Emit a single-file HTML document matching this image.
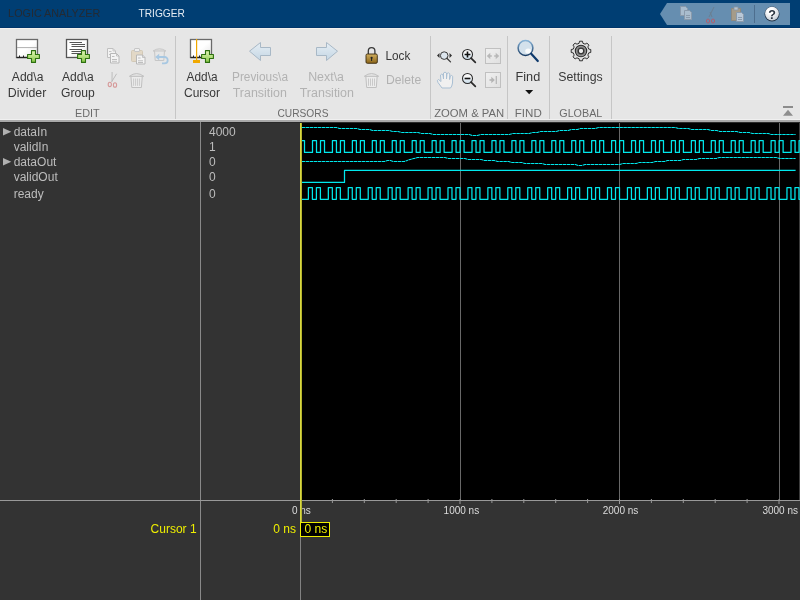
<!DOCTYPE html>
<html><head><meta charset="utf-8"><title>Logic Analyzer</title>
<style>
html,body{margin:0;padding:0;width:800px;height:600px;overflow:hidden;background:#333;}
svg{display:block;will-change:transform;font-family:"Liberation Sans", sans-serif;}
</style></head>
<body>
<svg width="800" height="600" viewBox="0 0 800 600">
<defs>
<linearGradient id="gp" x1="0" y1="0" x2="0" y2="1"><stop offset="0" stop-color="#e4f8b8"/><stop offset="1" stop-color="#88c848"/></linearGradient>
<linearGradient id="wg" x1="0" y1="0" x2="1" y2="1"><stop offset="0.5" stop-color="#ffffff"/><stop offset="1" stop-color="#e2e2e2"/></linearGradient>
<linearGradient id="ag" x1="0" y1="0" x2="0" y2="1"><stop offset="0" stop-color="#e6eef4"/><stop offset="1" stop-color="#c4d6e4"/></linearGradient>
<linearGradient id="lg" x1="0" y1="0" x2="0" y2="1"><stop offset="0" stop-color="#d2b060"/><stop offset="1" stop-color="#8a6418"/></linearGradient>
<radialGradient id="fg" cx="0.6" cy="0.65" r="0.6"><stop offset="0" stop-color="#ffffff"/><stop offset="1" stop-color="#c8d8e6"/></radialGradient>
<radialGradient id="gg" cx="0.5" cy="0.5" r="0.5"><stop offset="0.5" stop-color="#f4f4f4"/><stop offset="1" stop-color="#cfcfcf"/></radialGradient><radialGradient id="gi" cx="0.5" cy="0.5" r="0.5"><stop offset="0.45" stop-color="#5a5a5a"/><stop offset="1" stop-color="#b0b0b0"/></radialGradient><linearGradient id="fr" x1="0" y1="0" x2="0" y2="1"><stop offset="0" stop-color="#86b2d6"/><stop offset="1" stop-color="#1a3c64"/></linearGradient>
<radialGradient id="hg" cx="0.4" cy="0.3" r="0.7"><stop offset="0.3" stop-color="#ffffff"/><stop offset="1" stop-color="#c9d0d8"/></radialGradient>
<linearGradient id="zg" x1="0" y1="0" x2="0" y2="1"><stop offset="0.3" stop-color="#f8f8f8"/><stop offset="1" stop-color="#c8dcea"/></linearGradient>
<linearGradient id="bx" x1="0" y1="0" x2="1" y2="1"><stop offset="0" stop-color="#f0f0f0"/><stop offset="1" stop-color="#e0e0e0"/></linearGradient>
</defs>
<rect x="0" y="0" width="800" height="27" fill="#003e73"/>
<rect x="0" y="27" width="800" height="1" fill="#00356a"/>
<rect x="0" y="28" width="800" height="1" fill="#f2f0ee"/>
<text x="8.13" y="17" font-size="10.5" fill="#232a33" textLength="92.17" lengthAdjust="spacingAndGlyphs" >LOGIC ANALYZER</text>
<text x="138.52" y="17" font-size="10.5" fill="#e4ebf2" textLength="46.35" lengthAdjust="spacingAndGlyphs" >TRIGGER</text>
<path d="M660 14 L667 3 L790 3 L790 25 L667 25 Z" fill="#668eb0"/>
<line x1="754.5" y1="5" x2="754.5" y2="23" stroke="#4d6e8e" stroke-width="1"/>
<g transform="translate(680,6)"><path d="M0.5 0.5 H5.5 L7.5 2.5 V9.5 H0.5 Z" fill="#a9bccd" stroke="#8a9aab"/><path d="M4.5 4.5 H9.5 L11.5 6.5 V13.5 H4.5 Z" fill="#a9bccd" stroke="#8a9aab"/><path d="M6 9.5 H10 M6 11.5 H10" stroke="#8a9aab"/></g>
<g transform="translate(704,6)"><path d="M5 11 L10 1 M8 11 L6 6" stroke="#6a7f92" stroke-width="1"/><ellipse cx="4" cy="15" rx="1.6" ry="2" fill="none" stroke="#b06070" stroke-width="1"/><ellipse cx="9" cy="15" rx="1.6" ry="2" fill="none" stroke="#b06070" stroke-width="1"/></g>
<g transform="translate(731,6)"><rect x="0.5" y="2.5" width="9" height="12" fill="#a59c8a" stroke="#8f8a80"/><rect x="3" y="1" width="4" height="3" fill="#b8c4cf" stroke="#8a96a2" stroke-width="0.8"/><path d="M5.5 6.5 H10.5 L12.5 8.5 V15.5 H5.5 Z" fill="#b8c8d8" stroke="#8a9aab"/><path d="M7 11.5 H11 M7 13.5 H11" stroke="#8a9aab"/></g>
<circle cx="772" cy="14" r="7.5" fill="#24364a"/><circle cx="772" cy="13.6" r="6.9" fill="url(#hg)"/><text x="772" y="18.6" font-size="12.5" font-weight="bold" fill="#2a3440" text-anchor="middle">?</text>
<rect x="0" y="29" width="800" height="90" fill="#e6e6e6"/>
<rect x="0" y="119" width="800" height="1" fill="#f0f0f0"/>
<rect x="0" y="120" width="800" height="2" fill="#a9a9a9"/>
<line x1="175.5" y1="36" x2="175.5" y2="119" stroke="#c6c6c6" stroke-width="1"/>
<line x1="430.5" y1="36" x2="430.5" y2="119" stroke="#c6c6c6" stroke-width="1"/>
<line x1="507.5" y1="36" x2="507.5" y2="119" stroke="#c6c6c6" stroke-width="1"/>
<line x1="549.5" y1="36" x2="549.5" y2="119" stroke="#c6c6c6" stroke-width="1"/>
<line x1="611.5" y1="36" x2="611.5" y2="119" stroke="#c6c6c6" stroke-width="1"/>
<rect x="16.5" y="39.5" width="21" height="18" fill="url(#wg)" stroke="#6a6a6a" stroke-width="1.3"/>
<line x1="17" y1="47.6" x2="37" y2="47.6" stroke="#b0b0b0" stroke-width="1"/>
<path d="M16.5 57.5 H31" stroke="#222" stroke-width="1.3"/><path d="M19.5 57 V55.5 M23.5 57 V55.5 M27.5 57 V55.5" stroke="#222" stroke-width="1"/>
<g transform="translate(33.5,56.5)"><path d="M-2 -5.9 H2 V-2 H5.9 V2 H2 V5.9 H-2 V2 H-5.9 V-2 H-2 Z" fill="url(#gp)" stroke="#2d7010" stroke-width="1.1" stroke-linejoin="round"/></g>
<rect x="66.5" y="39.5" width="21" height="18" fill="url(#wg)" stroke="#555" stroke-width="1.3"/>
<line x1="69.5" y1="42.5" x2="82" y2="42.5" stroke="#555" stroke-width="1"/>
<line x1="71.5" y1="44.5" x2="85" y2="44.5" stroke="#555" stroke-width="1"/>
<line x1="71.5" y1="46.5" x2="85" y2="46.5" stroke="#555" stroke-width="1"/>
<line x1="69.5" y1="49.5" x2="82" y2="49.5" stroke="#555" stroke-width="1"/>
<line x1="71.5" y1="51.5" x2="85" y2="51.5" stroke="#555" stroke-width="1"/>
<line x1="71.5" y1="53.5" x2="85" y2="53.5" stroke="#555" stroke-width="1"/>
<g transform="translate(83.5,56.5)"><path d="M-2 -5.9 H2 V-2 H5.9 V2 H2 V5.9 H-2 V2 H-5.9 V-2 H-2 Z" fill="url(#gp)" stroke="#2d7010" stroke-width="1.1" stroke-linejoin="round"/></g>
<path d="M107.5 48.5 H113.0 L115.5 51.0 V57.5 H107.5 Z" fill="#f2f2f2" stroke="#c0c0c0"/><path d="M113.0 48.5 V51.0 H115.5" fill="none" stroke="#c0c0c0" stroke-width="0.8"/><line x1="109" y1="51.5" x2="111.5" y2="51.5" stroke="#c0c0c0" stroke-width="0.9"/><line x1="109" y1="54.5" x2="113" y2="54.5" stroke="#c0c0c0" stroke-width="0.9"/>
<path d="M110.5 53.5 H116.5 L119.0 56.0 V63.0 H110.5 Z" fill="#f4f4f4" stroke="#b8b8b8"/><path d="M116.5 53.5 V56.0 H119.0" fill="none" stroke="#b8b8b8" stroke-width="0.8"/><line x1="112" y1="56.5" x2="114.5" y2="56.5" stroke="#b8b8b8" stroke-width="0.9"/><line x1="112" y1="59.5" x2="117" y2="59.5" stroke="#b8b8b8" stroke-width="0.9"/><line x1="112" y1="61.3" x2="117" y2="61.3" stroke="#b8b8b8" stroke-width="0.9"/>
<rect x="131.5" y="50.5" width="11" height="11" rx="1" fill="#e2d8c6" stroke="#d2c8b6"/>
<rect x="134.5" y="48.5" width="5" height="3" rx="0.5" fill="#efefef" stroke="#c2c2c2" stroke-width="0.9"/>
<path d="M136.5 55.0 H142.5 L145.0 57.5 V64.0 H136.5 Z" fill="#f4f4f4" stroke="#b8b8b8"/><path d="M142.5 55.0 V57.5 H145.0" fill="none" stroke="#b8b8b8" stroke-width="0.8"/><line x1="138" y1="58.0" x2="140.5" y2="58.0" stroke="#b8b8b8" stroke-width="0.9"/><line x1="138" y1="60.8" x2="143" y2="60.8" stroke="#b8b8b8" stroke-width="0.9"/><line x1="138" y1="62.5" x2="143" y2="62.5" stroke="#b8b8b8" stroke-width="0.9"/>
<path d="M154.5 50.5 H164.5 L163.8 60.5 H155.2 Z" fill="#e6e6e6" stroke="#c6c6c6"/>
<path d="M153 51 Q159.5 46.5 166 51 Z" fill="#dedede" stroke="#c6c6c6" stroke-width="0.9"/>
<path d="M158.5 57 H164.5 A3.2 3.2 0 0 1 164.5 63.4 H162" fill="none" stroke="#a8c8e2" stroke-width="1.8"/>
<path d="M155.2 57 L159.2 53.8 V60.2 Z" fill="#a8c8e2"/>
<path d="M112.1 72 L112 81.4 M116.6 73.8 L111.5 82" stroke="#b8b8b8" stroke-width="0.9"/>
<ellipse cx="109.8" cy="84.4" rx="1.6" ry="2.2" fill="none" stroke="#d69a9a" stroke-width="1.1"/>
<ellipse cx="115" cy="85" rx="1.6" ry="2.3" fill="none" stroke="#d69a9a" stroke-width="1.1"/>
<g transform="translate(129.1,72)"><path d="M1.8 4 H13.2 L12.3 15.5 H2.7 Z" fill="#ececec" stroke="#c0c0c0"/><path d="M0.3 4.3 Q7.5 -1.2 14.7 4.3 Z" fill="#e4e4e4" stroke="#c0c0c0"/><path d="M4.5 6.5 V13.8 M6.5 6.5 V13.8 M8.5 6.5 V13.8 M10.5 6.5 V13.8" stroke="#c0c0c0" stroke-width="0.8"/></g>
<rect x="190.5" y="39.5" width="21" height="18" fill="url(#wg)" stroke="#6a6a6a" stroke-width="1.3"/>
<path d="M190.5 57.5 H205" stroke="#222" stroke-width="1.3"/><path d="M193.5 57 V55.5 M199.5 57 V55.5" stroke="#222" stroke-width="1"/>
<line x1="196.6" y1="39" x2="196.6" y2="61" stroke="#f0a800" stroke-width="1.2"/>
<rect x="193" y="60" width="7" height="3" fill="#f0a800"/>
<g transform="translate(207.5,56.5)"><path d="M-2 -5.9 H2 V-2 H5.9 V2 H2 V5.9 H-2 V2 H-5.9 V-2 H-2 Z" fill="url(#gp)" stroke="#2d7010" stroke-width="1.1" stroke-linejoin="round"/></g>
<path d="M249.5 51.2 L260.5 42.5 V47.5 H270.5 V55.5 H260.5 V60.5 Z" fill="url(#ag)" stroke="#a8b8c6" stroke-width="1"/>
<path d="M337.5 51.2 L326.5 42.5 V47.5 H316.5 V55.5 H326.5 V60.5 Z" fill="url(#ag)" stroke="#a8b8c6" stroke-width="1"/>
<path d="M368.3 55 V51 A3.3 3.3 0 0 1 374.9 51 V55" fill="none" stroke="#3a3a3a" stroke-width="1.3"/>
<rect x="366" y="54" width="11.3" height="9.3" rx="1.3" fill="url(#lg)" stroke="#3a2a10" stroke-width="0.9"/>
<circle cx="371.6" cy="57.8" r="1.1" fill="#222"/><path d="M371.6 58 V61" stroke="#222" stroke-width="1"/>
<g transform="translate(364,72)"><path d="M1.8 4 H13.2 L12.3 15.5 H2.7 Z" fill="#ececec" stroke="#c0c0c0"/><path d="M0.3 4.3 Q7.5 -1.2 14.7 4.3 Z" fill="#e4e4e4" stroke="#c0c0c0"/><path d="M4.5 6.5 V13.8 M6.5 6.5 V13.8 M8.5 6.5 V13.8 M10.5 6.5 V13.8" stroke="#c0c0c0" stroke-width="0.8"/></g>
<circle cx="444.2" cy="55.6" r="3.8" fill="#dde6ee" stroke="#3a3a3a" stroke-width="1.0"/><line x1="446.8866" y1="58.2866" x2="450.4866" y2="61.8866" stroke="#3a3a3a" stroke-width="1.3" stroke-linecap="round"/>
<path d="M437 55.5 L439.5 53 V58 Z M452 55.5 L449.5 53 V58 Z" fill="#333"/>
<circle cx="467.5" cy="54.5" r="5" fill="url(#zg)" stroke="#2a2a2a" stroke-width="1.05"/><line x1="471.035" y1="58.035" x2="475.33500000000004" y2="62.334999999999994" stroke="#2a2a2a" stroke-width="1.7" stroke-linecap="round"/>
<path d="M464.6 54.5 H470.4 M467.5 51.6 V57.4" stroke="#111" stroke-width="1.6"/>
<circle cx="467.5" cy="78.5" r="5" fill="url(#zg)" stroke="#2a2a2a" stroke-width="1.05"/><line x1="471.035" y1="82.035" x2="475.33500000000004" y2="86.335" stroke="#2a2a2a" stroke-width="1.7" stroke-linecap="round"/>
<path d="M464.6 78.5 H470.4" stroke="#111" stroke-width="1.6"/>
<rect x="485.5" y="48.5" width="15" height="15" fill="url(#bx)" stroke="#c0c0c0"/>
<path d="M486.8 56 L490.3 52.8 V59.2 Z M499.2 56 L495.7 52.8 V59.2 Z" fill="#b8b8b8"/><path d="M489.5 56 H491.8 M494.2 56 H496.5" stroke="#b8b8b8" stroke-width="1.5"/>
<rect x="485.5" y="72.5" width="15" height="15" fill="url(#bx)" stroke="#c0c0c0"/>
<path d="M489.5 80 H492.5" stroke="#b4b4b4" stroke-width="1.6"/><path d="M494.8 80 L491.3 76.8 V83.2 Z" fill="#b4b4b4"/><path d="M496.3 76 V84" stroke="#b4b4b4" stroke-width="1.2"/>
<path d="M442 88 L438 82.5 Q436.5 80 438.5 79.5 L441 81.5 L440.5 75 Q441.8 73.2 443 75 L443.5 79 L443.5 73 Q445 71.2 446.5 73 L446.5 79 L447 73.5 Q448.5 72 449.8 73.8 L449.6 79.5 L450.3 76 Q451.7 74.8 452.7 76.3 L452.5 83 Q452 86.5 450.5 88 Z" fill="#f0f0f0" stroke="#a9bfd3" stroke-width="1"/>
<circle cx="525.5" cy="48" r="7.4" fill="#d3e1ec" stroke="url(#fr)" stroke-width="1.5"/>
<ellipse cx="528.2" cy="51" rx="3" ry="2.6" fill="#ffffff" opacity="0.85"/>
<line x1="531" y1="53.6" x2="537.8" y2="61" stroke="#0f3a6c" stroke-width="2.2" stroke-linecap="round"/>
<path d="M525.2 90 H533.2 L529.2 94.3 Z" fill="#111"/>
<path d="M579.05 43.35 L579.52 41.21 L582.48 41.21 L582.95 43.35 L584.02 43.70 L585.03 44.21 L586.88 43.03 L588.97 45.12 L587.79 46.97 L588.30 47.98 L588.65 49.05 L590.79 49.52 L590.79 52.48 L588.65 52.95 L588.30 54.02 L587.79 55.03 L588.97 56.88 L586.88 58.97 L585.03 57.79 L584.02 58.30 L582.95 58.65 L582.48 60.79 L579.52 60.79 L579.05 58.65 L577.98 58.30 L576.97 57.79 L575.12 58.97 L573.03 56.88 L574.21 55.03 L573.70 54.02 L573.35 52.95 L571.21 52.48 L571.21 49.52 L573.35 49.05 L573.70 47.98 L574.21 46.97 L573.03 45.12 L575.12 43.03 L576.97 44.21 L577.98 43.70 Z" fill="url(#gg)" stroke="#333" stroke-width="1" stroke-linejoin="round"/>
<circle cx="581.0" cy="51.0" r="5.7" fill="url(#gi)" stroke="#2a2a2a" stroke-width="1.1"/>
<circle cx="581.0" cy="51.0" r="2.7" fill="#ececec" stroke="#333" stroke-width="1.1"/>
<rect x="783" y="106" width="10" height="2" fill="#8c8c8c"/><path d="M783 115.8 L788 109.8 L793 115.8 Z" fill="#8e8e8e"/>
<text x="11.83" y="80.9" font-size="12" fill="#383838" textLength="31.57" lengthAdjust="spacingAndGlyphs" >Add\a</text>
<text x="7.84" y="96.9" font-size="12" fill="#383838" textLength="38.47" lengthAdjust="spacingAndGlyphs" >Divider</text>
<text x="62.08" y="80.9" font-size="12" fill="#383838" textLength="31.52" lengthAdjust="spacingAndGlyphs" >Add\a</text>
<text x="60.99" y="96.9" font-size="12" fill="#383838" textLength="33.72" lengthAdjust="spacingAndGlyphs" >Group</text>
<text x="186.58" y="80.9" font-size="12" fill="#383838" textLength="30.92" lengthAdjust="spacingAndGlyphs" >Add\a</text>
<text x="184.04" y="96.9" font-size="12" fill="#383838" textLength="35.96" lengthAdjust="spacingAndGlyphs" >Cursor</text>
<text x="232.03" y="80.9" font-size="12" fill="#b2b2b2" textLength="55.97" lengthAdjust="spacingAndGlyphs" >Previous\a</text>
<text x="232.72" y="96.9" font-size="12" fill="#b2b2b2" textLength="54.08" lengthAdjust="spacingAndGlyphs" >Transition</text>
<text x="308.18" y="80.9" font-size="12" fill="#b2b2b2" textLength="35.82" lengthAdjust="spacingAndGlyphs" >Next\a</text>
<text x="299.72" y="96.9" font-size="12" fill="#b2b2b2" textLength="54.28" lengthAdjust="spacingAndGlyphs" >Transition</text>
<text x="385.44" y="60.1" font-size="12" fill="#383838" textLength="24.85" lengthAdjust="spacingAndGlyphs" >Lock</text>
<text x="386.00" y="84" font-size="12" fill="#b2b2b2" textLength="35.14" lengthAdjust="spacingAndGlyphs" >Delete</text>
<text x="515.46" y="80.8" font-size="12" fill="#383838" textLength="24.76" lengthAdjust="spacingAndGlyphs" >Find</text>
<text x="558.19" y="80.8" font-size="12" fill="#383838" textLength="44.50" lengthAdjust="spacingAndGlyphs" >Settings</text>
<text x="75.01" y="116.9" font-size="11" fill="#6b6b6b" textLength="24.74" lengthAdjust="spacingAndGlyphs" >EDIT</text>
<text x="277.48" y="116.9" font-size="11" fill="#6b6b6b" textLength="50.99" lengthAdjust="spacingAndGlyphs" >CURSORS</text>
<text x="434.15" y="116.9" font-size="11" fill="#6b6b6b" textLength="70.06" lengthAdjust="spacingAndGlyphs" >ZOOM &amp; PAN</text>
<text x="514.80" y="116.9" font-size="11" fill="#6b6b6b" textLength="27.00" lengthAdjust="spacingAndGlyphs" >FIND</text>
<text x="559.26" y="116.9" font-size="11" fill="#6b6b6b" textLength="43.10" lengthAdjust="spacingAndGlyphs" >GLOBAL</text>
<rect x="0" y="122" width="800" height="478" fill="#333333"/>
<rect x="0" y="122" width="800" height="1" fill="#2a2a2a"/>
<rect x="300" y="123" width="499" height="377" fill="#000"/>
<rect x="799" y="123" width="1" height="377" fill="#3c3c3c"/>
<line x1="460.5" y1="123" x2="460.5" y2="500" stroke="#686868" stroke-width="1"/>
<line x1="619.5" y1="123" x2="619.5" y2="500" stroke="#686868" stroke-width="1"/>
<line x1="779.5" y1="123" x2="779.5" y2="500" stroke="#686868" stroke-width="1"/>
<line x1="200.5" y1="122" x2="200.5" y2="600" stroke="#8a8a8a" stroke-width="1"/>
<line x1="0" y1="500.5" x2="800" y2="500.5" stroke="#999" stroke-width="1"/>
<line x1="300.5" y1="500" x2="300.5" y2="600" stroke="#828282" stroke-width="1"/>
<line x1="300.50" y1="499" x2="300.50" y2="504" stroke="#999" stroke-width="1"/>
<line x1="332.40" y1="499" x2="332.40" y2="503" stroke="#999" stroke-width="1"/>
<line x1="364.30" y1="499" x2="364.30" y2="503" stroke="#999" stroke-width="1"/>
<line x1="396.20" y1="499" x2="396.20" y2="503" stroke="#999" stroke-width="1"/>
<line x1="428.10" y1="499" x2="428.10" y2="503" stroke="#999" stroke-width="1"/>
<line x1="460.00" y1="499" x2="460.00" y2="504" stroke="#999" stroke-width="1"/>
<line x1="491.90" y1="499" x2="491.90" y2="503" stroke="#999" stroke-width="1"/>
<line x1="523.80" y1="499" x2="523.80" y2="503" stroke="#999" stroke-width="1"/>
<line x1="555.70" y1="499" x2="555.70" y2="503" stroke="#999" stroke-width="1"/>
<line x1="587.60" y1="499" x2="587.60" y2="503" stroke="#999" stroke-width="1"/>
<line x1="619.50" y1="499" x2="619.50" y2="504" stroke="#999" stroke-width="1"/>
<line x1="651.40" y1="499" x2="651.40" y2="503" stroke="#999" stroke-width="1"/>
<line x1="683.30" y1="499" x2="683.30" y2="503" stroke="#999" stroke-width="1"/>
<line x1="715.20" y1="499" x2="715.20" y2="503" stroke="#999" stroke-width="1"/>
<line x1="747.10" y1="499" x2="747.10" y2="503" stroke="#999" stroke-width="1"/>
<line x1="779.00" y1="499" x2="779.00" y2="504" stroke="#999" stroke-width="1"/>
<text x="301.4" y="513.8" font-size="10" fill="#dcdcdc" text-anchor="middle" >0 ns</text>
<text x="461.4" y="513.8" font-size="10" fill="#dcdcdc" text-anchor="middle" >1000 ns</text>
<text x="620.5" y="513.8" font-size="10" fill="#dcdcdc" text-anchor="middle" >2000 ns</text>
<text x="798" y="513.8" font-size="10" fill="#dcdcdc" text-anchor="end" >3000 ns</text>
<text x="13.7" y="136" font-size="12" fill="#bdbdbd" text-anchor="start" >dataIn</text>
<text x="209" y="136" font-size="12" fill="#bdbdbd" text-anchor="start" >4000</text>
<path d="M3 128 L11.3 131.8 L3 135.6 Z" fill="#b0b0b0"/>
<text x="13.7" y="151" font-size="12" fill="#bdbdbd" text-anchor="start" >validIn</text>
<text x="209" y="151" font-size="12" fill="#bdbdbd" text-anchor="start" >1</text>
<text x="13.7" y="166" font-size="12" fill="#bdbdbd" text-anchor="start" >dataOut</text>
<text x="209" y="166" font-size="12" fill="#bdbdbd" text-anchor="start" >0</text>
<path d="M3 158 L11.3 161.8 L3 165.6 Z" fill="#b0b0b0"/>
<text x="13.7" y="181" font-size="12" fill="#bdbdbd" text-anchor="start" >validOut</text>
<text x="209" y="181" font-size="12" fill="#bdbdbd" text-anchor="start" >0</text>
<text x="13.7" y="198" font-size="12" fill="#bdbdbd" text-anchor="start" >ready</text>
<text x="209" y="198" font-size="12" fill="#bdbdbd" text-anchor="start" >0</text>
<path d="M302.00 127.50 L336.40 127.50 L339.40 128.50 L356.90 128.50 L359.90 129.50 L369.40 129.50 L372.40 130.50 L389.40 130.50 L392.40 131.50 L398.15 131.50 L401.15 132.50 L418.15 132.50 L421.15 133.50 L430.00 133.50 L433.00 134.50 L469.40 134.50 L472.40 135.50 L477.40 135.50 L480.40 134.50 L509.40 134.50 L512.40 133.50 L529.40 133.50 L532.40 132.50 L537.40 132.50 L540.40 131.50 L556.40 131.50 L559.40 130.50 L568.40 130.50 L571.40 129.50 L577.40 129.50 L580.40 128.50 L595.40 128.50 L598.40 127.50 L675.40 127.50 L678.40 128.50 L688.40 128.50 L691.40 129.50 L708.15 129.50 L711.15 130.50 L716.90 130.50 L719.90 131.50 L736.90 131.50 L739.90 132.50 L749.40 132.50 L752.40 133.50 L768.40 133.50 L771.40 134.50 L795.60 134.50" fill="none" stroke="#00e8ec" stroke-width="1.05" stroke-linejoin="round" stroke-dasharray="3.45 0.55"/>
<path d="M302.00 161.50 L384.40 161.50 L387.40 160.50 L390.40 160.50 L393.40 161.50 L404.40 161.50 L407.40 160.50 L406.90 160.50 L409.90 159.50 L410.40 159.50 L413.40 158.50 L414.40 158.50 L417.40 157.50 L445.00 157.50 L448.00 158.50 L465.00 158.50 L468.00 159.50 L481.30 159.50 L484.30 160.50 L494.40 160.50 L497.40 161.50 L508.80 161.50 L511.80 162.50 L521.90 162.50 L524.90 163.50 L541.90 163.50 L544.90 164.50 L575.40 164.50 L578.40 165.50 L581.90 165.50 L584.90 164.50 L620.00 164.50 L623.00 163.50 L636.30 163.50 L639.30 162.50 L652.40 162.50 L655.40 161.50 L664.40 161.50 L667.40 160.50 L680.40 160.50 L683.40 159.50 L696.40 159.50 L699.40 158.50 L716.40 158.50 L719.40 157.50 L776.40 157.50 L779.40 158.50 L795.60 158.50" fill="none" stroke="#00e8ec" stroke-width="1.05" stroke-linejoin="round" stroke-dasharray="3.45 0.55"/>
<path d="M302 140.5 H304.50 V152.4 H312.50 V140.5 H316.50 V152.4 H320.50 V140.5 H324.50 V152.4 H332.44 V140.5 H336.44 V152.4 H340.44 V140.5 H344.44 V152.4 H352.38 V140.5 H356.38 V152.4 H360.38 V140.5 H364.38 V152.4 H372.32 V140.5 H376.32 V152.4 H380.32 V140.5 H384.32 V152.4 H392.26 V140.5 H396.26 V152.4 H400.26 V140.5 H404.26 V152.4 H412.20 V140.5 H416.20 V152.4 H420.20 V140.5 H424.20 V152.4 H432.14 V140.5 H436.14 V152.4 H440.14 V140.5 H444.14 V152.4 H452.08 V140.5 H456.08 V152.4 H460.08 V140.5 H464.08 V152.4 H472.02 V140.5 H476.02 V152.4 H480.02 V140.5 H484.02 V152.4 H491.96 V140.5 H495.96 V152.4 H499.96 V140.5 H503.96 V152.4 H511.90 V140.5 H515.90 V152.4 H519.90 V140.5 H523.90 V152.4 H531.84 V140.5 H535.84 V152.4 H539.84 V140.5 H543.84 V152.4 H551.78 V140.5 H555.78 V152.4 H559.78 V140.5 H563.78 V152.4 H571.72 V140.5 H575.72 V152.4 H579.72 V140.5 H583.72 V152.4 H591.66 V140.5 H595.66 V152.4 H599.66 V140.5 H603.66 V152.4 H611.60 V140.5 H615.60 V152.4 H619.60 V140.5 H623.60 V152.4 H631.54 V140.5 H635.54 V152.4 H639.54 V140.5 H643.54 V152.4 H651.48 V140.5 H655.48 V152.4 H659.48 V140.5 H663.48 V152.4 H671.42 V140.5 H675.42 V152.4 H679.42 V140.5 H683.42 V152.4 H691.36 V140.5 H695.36 V152.4 H699.36 V140.5 H703.36 V152.4 H711.30 V140.5 H715.30 V152.4 H719.30 V140.5 H723.30 V152.4 H731.24 V140.5 H735.24 V152.4 H739.24 V140.5 H743.24 V152.4 H751.18 V140.5 H755.18 V152.4 H759.18 V140.5 H763.18 V152.4 H771.12 V140.5 H775.12 V152.4 H779.12 V140.5 H783.12 V152.4 H791.06 V140.5 H795.06 V152.4 H799.06 V140.5 H800" fill="none" stroke="#00e8ec" stroke-width="1.25" stroke-linejoin="round"/>
<path d="M302 182.4 H344.50 V170.4 H795.6" fill="none" stroke="#00e8ec" stroke-width="1.25" stroke-linejoin="round"/>
<path d="M302 199.3 H308.40 V187.6 H312.40 V199.3 H316.40 V187.6 H320.40 V199.3 H328.34 V187.6 H332.34 V199.3 H336.34 V187.6 H340.34 V199.3 H348.28 V187.6 H352.28 V199.3 H356.28 V187.6 H360.28 V199.3 H368.22 V187.6 H372.22 V199.3 H376.22 V187.6 H380.22 V199.3 H388.16 V187.6 H392.16 V199.3 H396.16 V187.6 H400.16 V199.3 H408.10 V187.6 H412.10 V199.3 H416.10 V187.6 H420.10 V199.3 H428.04 V187.6 H432.04 V199.3 H436.04 V187.6 H440.04 V199.3 H447.98 V187.6 H451.98 V199.3 H455.98 V187.6 H459.98 V199.3 H467.92 V187.6 H471.92 V199.3 H475.92 V187.6 H479.92 V199.3 H487.86 V187.6 H491.86 V199.3 H495.86 V187.6 H499.86 V199.3 H507.80 V187.6 H511.80 V199.3 H515.80 V187.6 H519.80 V199.3 H527.74 V187.6 H531.74 V199.3 H535.74 V187.6 H539.74 V199.3 H547.68 V187.6 H551.68 V199.3 H555.68 V187.6 H559.68 V199.3 H567.62 V187.6 H571.62 V199.3 H575.62 V187.6 H579.62 V199.3 H587.56 V187.6 H591.56 V199.3 H595.56 V187.6 H599.56 V199.3 H607.50 V187.6 H611.50 V199.3 H615.50 V187.6 H619.50 V199.3 H627.44 V187.6 H631.44 V199.3 H635.44 V187.6 H639.44 V199.3 H647.38 V187.6 H651.38 V199.3 H655.38 V187.6 H659.38 V199.3 H667.32 V187.6 H671.32 V199.3 H675.32 V187.6 H679.32 V199.3 H687.26 V187.6 H691.26 V199.3 H695.26 V187.6 H699.26 V199.3 H707.20 V187.6 H711.20 V199.3 H715.20 V187.6 H719.20 V199.3 H727.14 V187.6 H731.14 V199.3 H735.14 V187.6 H739.14 V199.3 H747.08 V187.6 H751.08 V199.3 H755.08 V187.6 H759.08 V199.3 H767.02 V187.6 H771.02 V199.3 H775.02 V187.6 H779.02 V199.3 H786.96 V187.6 H790.96 V199.3 H794.96 V187.6 H798.96 V199.3 H800" fill="none" stroke="#00e8ec" stroke-width="1.25" stroke-linejoin="round"/>
<rect x="300" y="123" width="1" height="399" fill="#d8d842"/><rect x="301" y="123" width="1" height="399" fill="#b4b42e"/>
<text x="196.6" y="533" font-size="12" fill="#eeee00" text-anchor="end" >Cursor 1</text>
<text x="296" y="533" font-size="12" fill="#eeee00" text-anchor="end" >0 ns</text>
<rect x="300.5" y="522.5" width="29" height="14" fill="#000" stroke="#eeee00" stroke-width="1"/>
<text x="315.8" y="533" font-size="12" fill="#eeee00" text-anchor="middle" >0 ns</text>
</svg>
</body></html>
